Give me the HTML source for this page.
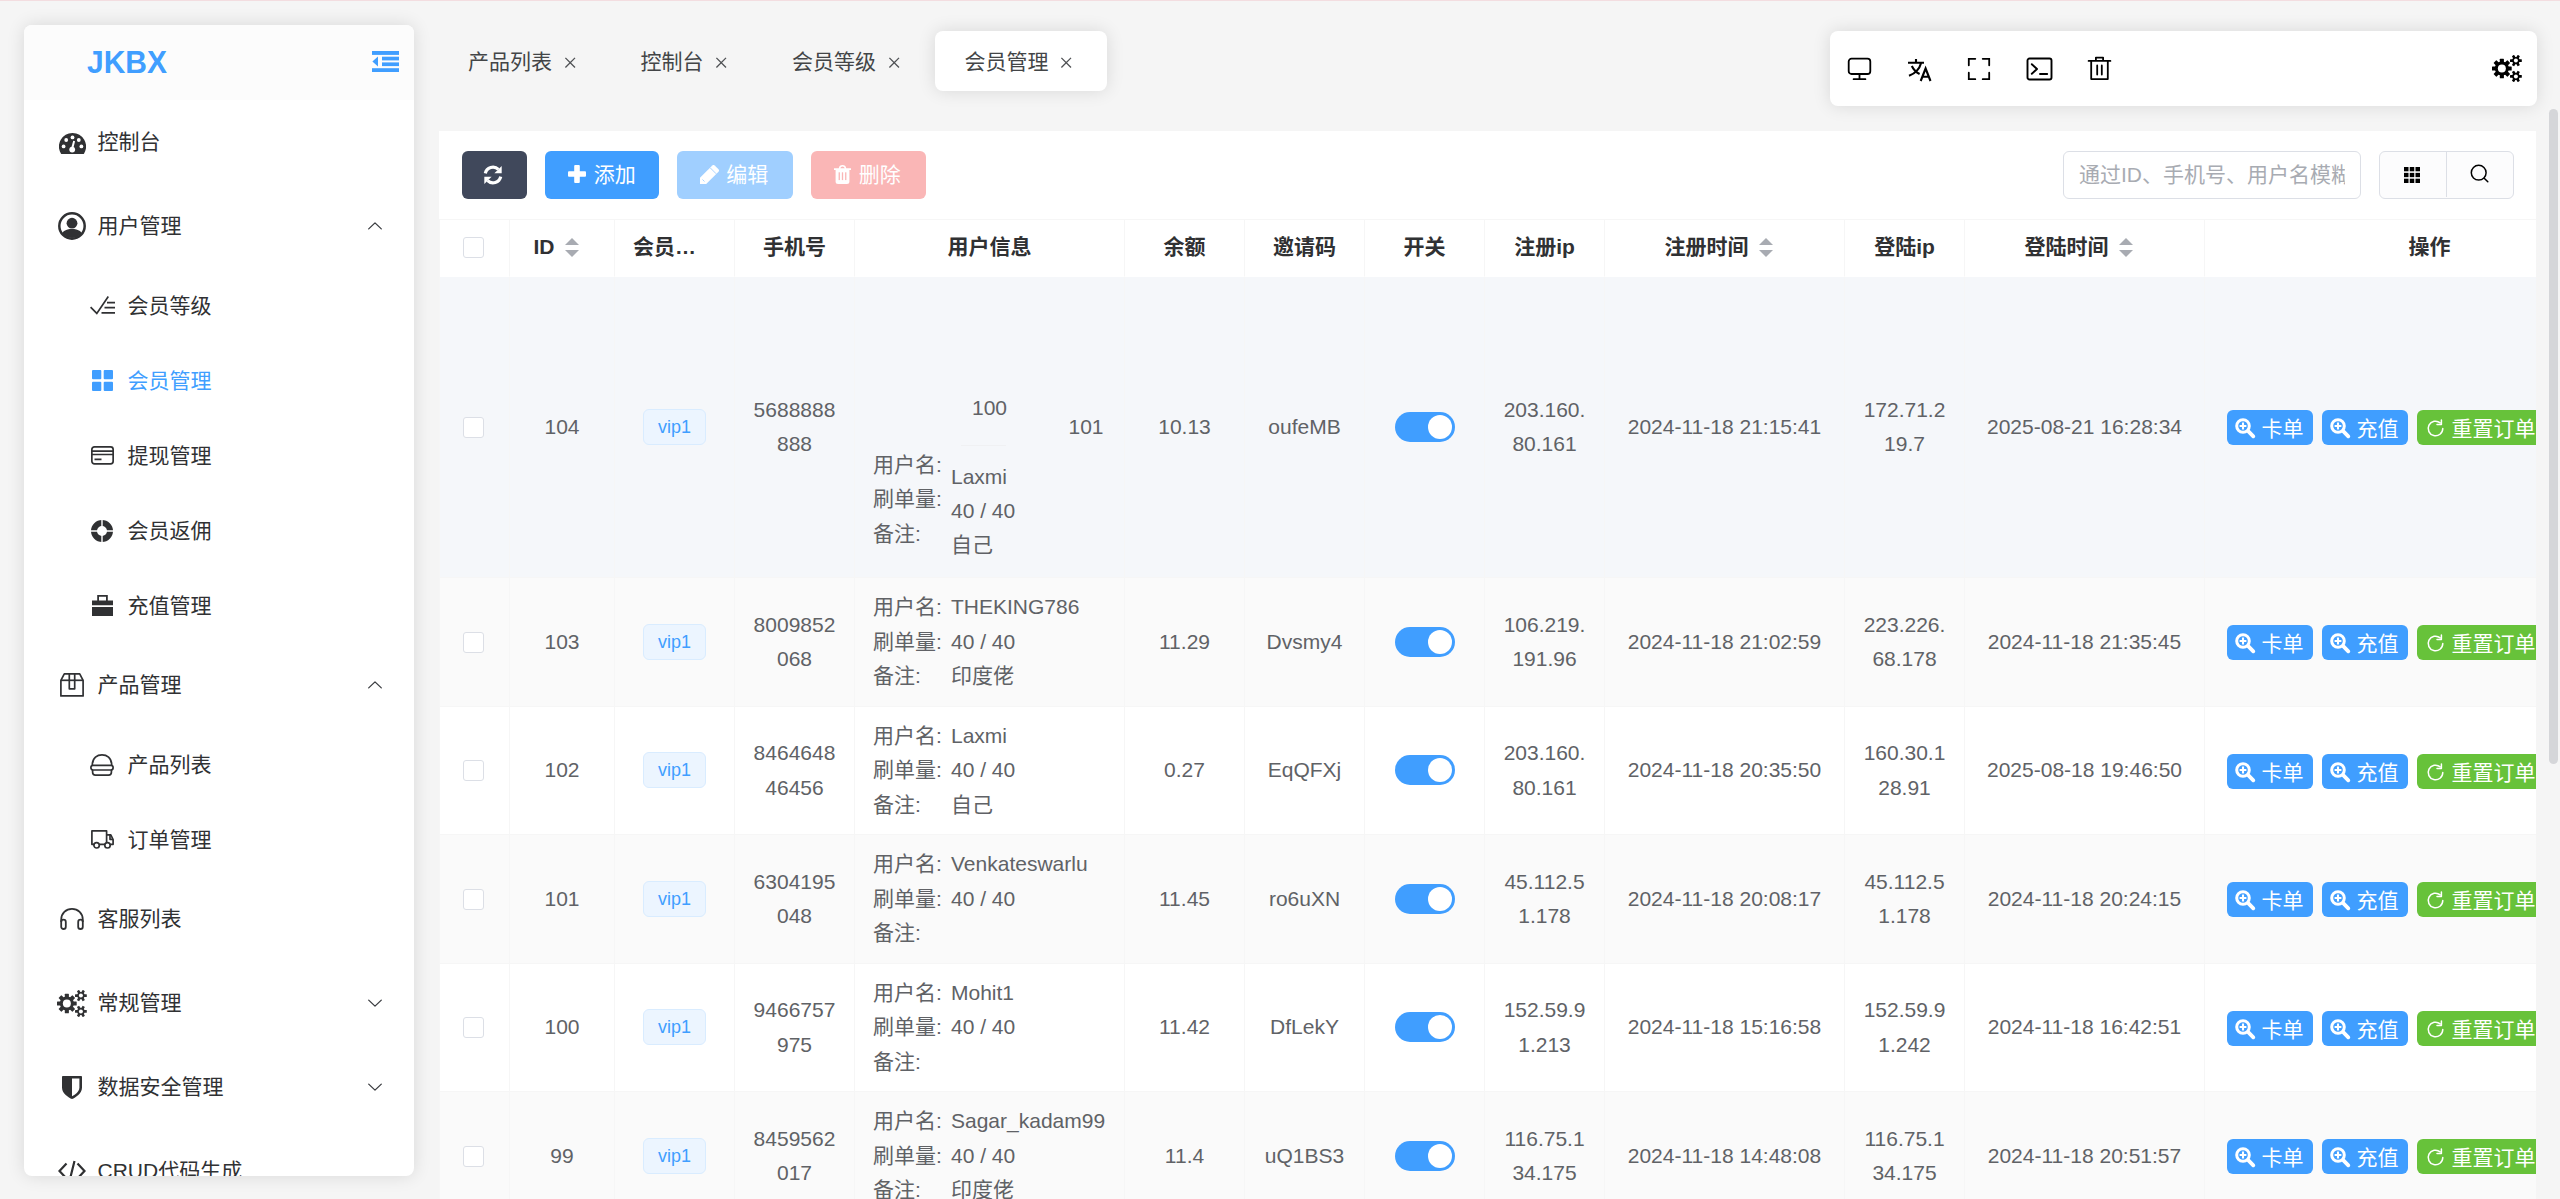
<!DOCTYPE html>
<html lang="zh-CN">
<head>
<meta charset="utf-8">
<title>JKBX</title>
<style>
*{box-sizing:border-box;margin:0;padding:0}
html,body{width:2560px;height:1199px;overflow:hidden;background:#f5f5f5}
body{font-family:"Liberation Sans","Noto Sans CJK SC",sans-serif;font-size:21px;color:#303133;position:relative}
svg{display:block}
#topline{position:absolute;left:0;top:0;width:2560px;height:1px;background:#f3dde0}
/* ---------- sidebar ---------- */
#side{position:absolute;left:24px;top:25px;width:390px;height:1150.5px;background:#fff;border-radius:8px;box-shadow:0 0 18px rgba(0,0,0,.12);overflow:hidden}
#logo{height:75px;background:#fcfcfc;position:relative}
#logo b{position:absolute;left:63px;top:21px;font-size:30px;line-height:34px;color:#409eff;font-weight:700;transform:scaleY(1.075);transform-origin:50% 60%}
#logo svg{position:absolute;left:348px;top:26px}
.mi{position:relative;height:84px;line-height:84px;padding-left:73.5px;white-space:nowrap;color:#303133}
.mi.sub{height:75px;line-height:75px;padding-left:103.5px}
.mi.act{color:#409eff}
.mi .ic{position:absolute;left:30px;top:0;width:36px;height:84px;display:flex;align-items:center;justify-content:center}
.mi.sub .ic{left:60px;height:75px}
.mi .arr{position:absolute;left:342px;top:50%;margin-top:-9px;width:18px;height:18px}
.mi span{position:relative;top:0px}
/* ---------- tabs ---------- */
#tabs{position:absolute;left:438px;top:31px;height:60px;display:flex}
.tab{height:60px;line-height:60px;padding:0 30px;display:flex;align-items:center;color:#434547;white-space:nowrap;border-radius:8px}
.tab.on{background:#fff;box-shadow:0 0 18px rgba(0,0,0,.12)}
.tab span{position:relative;top:1px}
.tab svg{margin-left:7.5px}
/* ---------- tools ---------- */
#tools{position:absolute;left:1830px;top:31px;width:707px;height:75px;background:#fff;border-radius:8px;box-shadow:0 0 18px rgba(0,0,0,.12)}
#tools svg{position:absolute}
/* ---------- card ---------- */
#card{position:absolute;left:439px;top:131px;width:2097px;height:1068px;background:#fff;overflow:hidden}
.btn{position:absolute;top:20px;height:48px;border-radius:6px;color:#fff;display:flex;align-items:center;justify-content:center;white-space:nowrap;line-height:48px}
.btn svg{margin-right:7.5px;position:relative;top:-1px}
#q{position:absolute;left:1624px;top:20px;width:298px;height:48px;border:1.5px solid #dcdfe6;border-radius:6px;background:#fff;color:#a8abb2;line-height:45px;padding-left:15px;overflow:hidden;white-space:nowrap}
#q span{display:block;width:266px;overflow:hidden}
#grp{position:absolute;left:1940px;top:20px;width:135px;height:48px;border:1.5px solid #dcdfe6;border-radius:6px;background:#fcfcfd}
#grp i{position:absolute;left:66px;top:0;width:1px;height:45px;background:#dcdfe6}
#grp svg{position:absolute}
/* ---------- table ---------- */
#tw{position:absolute;left:0;top:88px;width:2097px;border-left:1px solid #f6f6f6;height:980px;border-top:1px solid #f6f6f6;overflow:hidden}
table{border-collapse:separate;border-spacing:0;table-layout:fixed;width:2215px}
th,td{border-right:1px solid #f6f6f6;border-bottom:1px solid #f6f6f6;text-align:center;vertical-align:middle;padding:0 18px;line-height:34.5px;color:#606266;overflow:hidden;font-weight:400}
th{height:57px;padding-top:0;padding-bottom:2px;border-bottom-color:#fff;color:#303133;font-weight:700;background:#fff;white-space:nowrap}
th .ell{display:block;text-align:left;width:83px;overflow:hidden;text-overflow:ellipsis;white-space:nowrap}
td{word-break:break-all}
tr.hv td{background:#f5f7fa}
tr.st td{background:#fafafa}
.nw{white-space:nowrap}
.cb{display:inline-block;width:21px;height:21px;border:1.5px solid #dcdfe6;border-radius:3px;background:#fff;vertical-align:middle;position:relative;top:-1px;left:-1px}
.ct{display:inline-block;position:relative;width:36px;height:21px;vertical-align:middle;margin-right:0}
.ct b{position:absolute;left:10.5px;width:0;height:0;border:7.5px solid transparent}
.ct .u{border-bottom-color:#a8abb2;top:-7.7px}
.ct .d{border-top-color:#a8abb2;top:11.3px}
.tag{display:inline-block;height:36px;line-height:34.5px;padding:0 13.5px;font-size:18px;color:#409eff;background:#ecf5ff;border:1.5px solid #d9ecff;border-radius:6px;vertical-align:middle;position:relative;top:-0.3px}
td.ui{text-align:left;white-space:nowrap}
tr.hv td.ui{padding-top:0}
td.ui .l{display:inline-block;width:78px}
.odd{position:relative;height:300px;margin:0 -18px}
.odd span{position:absolute;line-height:24px;white-space:nowrap}
.odd u{position:absolute;left:106px;top:167.5px;width:45px;height:1px;background:#f0f1f3}
.sw{display:inline-block;width:60px;height:30px;border-radius:15px;background:#409eff;position:relative;vertical-align:middle;top:-1.5px}
.sw i{position:absolute;left:33px;top:3px;width:24px;height:24px;border-radius:50%;background:#fff}
td.op{text-align:left;padding:0 0 0 22px}
.ops{display:flex;white-space:nowrap;position:relative;top:0.6px}
.ob{display:inline-flex;align-items:center;height:35px;padding:0 9px 0 7.5px;border-radius:6px;color:#fff;margin-right:9.5px;line-height:35px}
.ob.b{background:#409eff}
.ob.g{background:#67c23a}
.ob em{font-style:normal;margin-left:6px;position:relative;top:1px}
.ob svg{position:relative;top:1px}
#sb{position:absolute;left:2549px;top:109px;width:9px;height:655px;border-radius:4.5px;background:#d5d6d9}
th .cb{top:-1px}
th .ct{top:1px}
</style>
</head>
<body>
<div id="topline"></div>
<aside id="side"><div id="logo"><b>JKBX</b><svg width="27" height="21" viewBox="0 0 27 21" fill="#409eff"><rect x="0" y="0" width="27" height="3.9"/><rect x="10" y="5.7" width="17" height="3.7"/><rect x="10" y="11.4" width="17" height="3.7"/><rect x="0" y="17.2" width="27" height="3.8"/><path d="M0.4 10.5 6 5.6V15.4z"/></svg></div><nav id="menu"><div class="mi"><i class="ic"><svg style="margin-top:2px" width="27" height="21" viewBox="0 0 27 21"><path d="M13.5 0A13.5 13.5 0 0 0 1.9 20.4Q2.2 21 2.9 21H24.1Q24.8 21 25.1 20.4A13.5 13.5 0 0 0 13.5 0z" fill="#303133"/><g fill="#fff"><circle cx="4.6" cy="13.4" r="1.9"/><circle cx="7.2" cy="7" r="1.9"/><circle cx="13.5" cy="4.4" r="1.9"/><circle cx="19.8" cy="7" r="1.9"/><circle cx="22.4" cy="13.4" r="1.9"/><circle cx="13.2" cy="16.6" r="2.9"/><path d="M11.9 16.2 14.2 7.8 16.1 8.3 13.9 16.8z"/></g></svg></i><span>控制台</span></div><div class="mi"><i class="ic"><svg width="28" height="28" viewBox="0 0 28 28"><clipPath id="uc"><circle cx="14" cy="14" r="12"/></clipPath><circle cx="14" cy="14" r="12.7" fill="none" stroke="#303133" stroke-width="2.5"/><circle cx="14" cy="11.2" r="5.4" fill="#303133"/><path d="M3 26c0-6.5 4.5-9 11-9s11 2.5 11 9z" fill="#303133" clip-path="url(#uc)"/></svg></i><span>用户管理</span><i class="arr"><svg width="18" height="18" viewBox="0 0 18 18" fill="none" stroke="#3a3c40" stroke-width="1.3" stroke-linecap="round" stroke-linejoin="round"><path d="M2.7 11.9 9 5.9 15.3 11.9"/></svg></i></div><div class="mi sub"><i class="ic"><svg width="25" height="19" viewBox="0 0 25 19" fill="none" stroke="#303133" stroke-width="1.7"><path d="M0.6 11.2 6.8 17.4 18.3 0.6"/><path d="M17 6.7H25M14.5 11.7H25M11.5 16.8H25"/></svg></i><span>会员等级</span></div><div class="mi sub act"><i class="ic"><svg width="21" height="21" viewBox="0 0 21 21" fill="#409eff"><rect x="0" y="0" width="9.3" height="9.3" rx="1"/><rect x="11.7" y="0" width="9.3" height="9.3" rx="1"/><rect x="0" y="11.7" width="9.3" height="9.3" rx="1"/><rect x="11.7" y="11.7" width="9.3" height="9.3" rx="1"/></svg></i><span>会员管理</span></div><div class="mi sub"><i class="ic"><svg width="23" height="19" viewBox="0 0 23 19" fill="none" stroke="#303133" stroke-width="1.7"><rect x="0.85" y="0.85" width="21.3" height="17" rx="2.6"/><path d="M1 5.2H22M1 8.5H22M3.5 13.3H10.5"/></svg></i><span>提现管理</span></div><div class="mi sub"><i class="ic"><svg width="22" height="22" viewBox="0 0 22 22"><circle cx="11" cy="11" r="8" fill="none" stroke="#303133" stroke-width="6"/><path d="M11 0V22M0 11H22" stroke="#fff" stroke-width="1.4"/></svg></i><span>会员返佣</span></div><div class="mi sub"><i class="ic"><svg width="21" height="21" viewBox="0 0 21 21" fill="#303133"><path d="M5.2 0H15.8V5.4H21V10.3H0V5.4H5.2zM7 1.8V5.4H14V1.8z" fill-rule="evenodd"/><rect x="0" y="12" width="21" height="9"/></svg></i><span>充值管理</span></div><div class="mi"><i class="ic"><svg width="24" height="24" viewBox="0 0 24 24" fill="none" stroke="#303133" stroke-width="1.7" stroke-linejoin="round"><path d="M4.3 0.9H19.7L23.1 7.3V22.9H0.9V7.3z"/><path d="M0.9 7.3H23.1"/><path d="M9.3 0.9V15.8H14.7V0.9"/></svg></i><span>产品管理</span><i class="arr"><svg width="18" height="18" viewBox="0 0 18 18" fill="none" stroke="#3a3c40" stroke-width="1.3" stroke-linecap="round" stroke-linejoin="round"><path d="M2.7 11.9 9 5.9 15.3 11.9"/></svg></i></div><div class="mi sub"><i class="ic"><svg width="24" height="22" viewBox="0 0 24 22" fill="none" stroke="#303133" stroke-width="1.7" stroke-linejoin="round"><path d="M2.3 11.3C2.3 3.5 7.5 0.9 12 0.9S21.7 3.5 21.7 11.3"/><rect x="0.9" y="11.3" width="22.2" height="4.7" rx="2.3"/><path d="M2.6 16V18.3Q2.6 21.1 5.4 21.1H18.6Q21.4 21.1 21.4 18.3V16"/></svg></i><span>产品列表</span></div><div class="mi sub"><i class="ic"><svg width="23" height="19" viewBox="0 0 23 19" fill="none" stroke="#303133" stroke-width="1.7" stroke-linejoin="round"><path d="M3 14.3H0.9V0.9H15.6V14.3H8.3"/><path d="M15.6 4.8H19.8L22.1 9.5V14.3H19.2M15.6 14.3H13.8"/><path d="M19 4.8V9.3H22"/><circle cx="5.6" cy="15.3" r="2.7" fill="#fff"/><circle cx="16.5" cy="15.3" r="2.7" fill="#fff"/></svg></i><span>订单管理</span></div><div class="mi"><i class="ic"><svg width="24" height="22" viewBox="0 0 24 22" fill="none" stroke="#303133" stroke-width="1.8"><path d="M1.2 14V11.7C1.2 5.5 6 0.9 12 0.9S22.8 5.5 22.8 11.7V14"/><rect x="1.2" y="11.6" width="4.6" height="9.4" rx="2.3"/><rect x="18.2" y="11.6" width="4.6" height="9.4" rx="2.3"/></svg></i><span>客服列表</span></div><div class="mi"><i class="ic"><svg width="30" height="27" viewBox="0 0 30 27"><circle cx="9.85" cy="13.5" r="7" fill="#303133"/><rect x="7.8" y="3.65" width="4.1" height="4.35" rx="0.5" fill="#303133" transform="rotate(0 9.85 13.5)"/><rect x="7.8" y="3.65" width="4.1" height="4.35" rx="0.5" fill="#303133" transform="rotate(45 9.85 13.5)"/><rect x="7.8" y="3.65" width="4.1" height="4.35" rx="0.5" fill="#303133" transform="rotate(90 9.85 13.5)"/><rect x="7.8" y="3.65" width="4.1" height="4.35" rx="0.5" fill="#303133" transform="rotate(135 9.85 13.5)"/><rect x="7.8" y="3.65" width="4.1" height="4.35" rx="0.5" fill="#303133" transform="rotate(180 9.85 13.5)"/><rect x="7.8" y="3.65" width="4.1" height="4.35" rx="0.5" fill="#303133" transform="rotate(225 9.85 13.5)"/><rect x="7.8" y="3.65" width="4.1" height="4.35" rx="0.5" fill="#303133" transform="rotate(270 9.85 13.5)"/><rect x="7.8" y="3.65" width="4.1" height="4.35" rx="0.5" fill="#303133" transform="rotate(315 9.85 13.5)"/><circle cx="9.85" cy="13.5" r="4" fill="#fff"/><circle cx="23.9" cy="5.6" r="3.7" fill="#303133"/><rect x="22.6" y="-0.3" width="2.6" height="3.7" rx="0.5" fill="#303133" transform="rotate(90 23.9 5.6)"/><rect x="22.6" y="-0.3" width="2.6" height="3.7" rx="0.5" fill="#303133" transform="rotate(150 23.9 5.6)"/><rect x="22.6" y="-0.3" width="2.6" height="3.7" rx="0.5" fill="#303133" transform="rotate(210 23.9 5.6)"/><rect x="22.6" y="-0.3" width="2.6" height="3.7" rx="0.5" fill="#303133" transform="rotate(270 23.9 5.6)"/><rect x="22.6" y="-0.3" width="2.6" height="3.7" rx="0.5" fill="#303133" transform="rotate(330 23.9 5.6)"/><rect x="22.6" y="-0.3" width="2.6" height="3.7" rx="0.5" fill="#303133" transform="rotate(390 23.9 5.6)"/><circle cx="23.9" cy="5.6" r="2" fill="#fff"/><circle cx="23.9" cy="21.4" r="3.7" fill="#303133"/><rect x="22.6" y="15.5" width="2.6" height="3.7" rx="0.5" fill="#303133" transform="rotate(90 23.9 21.4)"/><rect x="22.6" y="15.5" width="2.6" height="3.7" rx="0.5" fill="#303133" transform="rotate(150 23.9 21.4)"/><rect x="22.6" y="15.5" width="2.6" height="3.7" rx="0.5" fill="#303133" transform="rotate(210 23.9 21.4)"/><rect x="22.6" y="15.5" width="2.6" height="3.7" rx="0.5" fill="#303133" transform="rotate(270 23.9 21.4)"/><rect x="22.6" y="15.5" width="2.6" height="3.7" rx="0.5" fill="#303133" transform="rotate(330 23.9 21.4)"/><rect x="22.6" y="15.5" width="2.6" height="3.7" rx="0.5" fill="#303133" transform="rotate(390 23.9 21.4)"/><circle cx="23.9" cy="21.4" r="2" fill="#fff"/></svg></i><span>常规管理</span><i class="arr"><svg width="18" height="18" viewBox="0 0 18 18" fill="none" stroke="#3a3c40" stroke-width="1.3" stroke-linecap="round" stroke-linejoin="round"><path d="M2.7 6.1 9 12.1 15.3 6.1"/></svg></i></div><div class="mi"><i class="ic"><svg width="20" height="23" viewBox="0 0 20 23"><path d="M0.8 0H19.2Q20 0 20 0.8V11.5C20 17.5 13.5 21.7 10 23 6.5 21.7 0 17.5 0 11.5V0.8Q0 0 0.8 0z" fill="#303133"/><path d="M10 2.6H17.4V11.5C17.4 15.5 13.5 18.7 10 20.2z" fill="#fff"/></svg></i><span>数据安全管理</span><i class="arr"><svg width="18" height="18" viewBox="0 0 18 18" fill="none" stroke="#3a3c40" stroke-width="1.3" stroke-linecap="round" stroke-linejoin="round"><path d="M2.7 6.1 9 12.1 15.3 6.1"/></svg></i></div><div class="mi"><i class="ic"><svg width="28" height="22" viewBox="0 0 28 22" fill="none" stroke="#303133" stroke-width="2.2"><path d="M8.5 3.5 1.5 11 8.5 18.5M19.5 3.5 26.5 11 19.5 18.5M16.5 1 11.5 21"/></svg></i><span>CRUD代码生成</span></div></nav></aside>
<div id="tabs"><div class="tab"><span>产品列表</span><svg width="21" height="21" viewBox="0 0 21 21" fill="none" stroke="#4f5154" stroke-width="1.3"><path d="M5.4 6.9 15 16.5M15 6.9 5.4 16.5"/></svg></div><div class="tab"><span>控制台</span><svg width="21" height="21" viewBox="0 0 21 21" fill="none" stroke="#4f5154" stroke-width="1.3"><path d="M5.4 6.9 15 16.5M15 6.9 5.4 16.5"/></svg></div><div class="tab"><span>会员等级</span><svg width="21" height="21" viewBox="0 0 21 21" fill="none" stroke="#4f5154" stroke-width="1.3"><path d="M5.4 6.9 15 16.5M15 6.9 5.4 16.5"/></svg></div><div class="tab on"><span>会员管理</span><svg width="21" height="21" viewBox="0 0 21 21" fill="none" stroke="#4f5154" stroke-width="1.3"><path d="M5.4 6.9 15 16.5M15 6.9 5.4 16.5"/></svg></div></div>
<div id="tools"><svg style="left:17px;top:26.3px" width="25" height="24" viewBox="0 0 25 24" fill="none" stroke="#000" stroke-width="1.8" stroke-linecap="round"><rect x="1.7" y="1.7" width="21.6" height="15.3" rx="2.8"/><path d="M12.5 17V22.2M6.6 22.2H18.4"/></svg><svg style="left:77px;top:27px" width="26" height="24" viewBox="0 0 26 24" fill="none" stroke="#000" stroke-width="2.1"><path d="M1 4.7H17M9 1V4.7M14.2 4.7C12.5 11 8 15.5 2 17.8M4.8 8C6.5 11.5 9.5 14.5 12.6 16"/><path d="M13.7 23 18.6 10.5 23.5 23M15.3 18.7H21.9" stroke-linejoin="miter"/></svg><svg style="left:137.4px;top:25.6px" width="24" height="24" viewBox="0 0 24 24" fill="none" stroke="#000" stroke-width="1.8" stroke-linecap="round"><path d="M1.8 8.3V1.8H8.3M15.7 1.8H22.2V8.3M22.2 15.7V22.2H15.7M8.3 22.2H1.8V15.7"/></svg><svg style="left:196px;top:25.5px" width="27" height="24" viewBox="0 0 27 24" fill="none" stroke="#000" stroke-width="1.9" stroke-linecap="round" stroke-linejoin="round"><rect x="1.5" y="1.5" width="24" height="21" rx="2"/><path d="M5.8 7.2 11 12 5.8 16.8M14 17H21.2"/></svg><svg style="left:257px;top:25px" width="25" height="25" viewBox="0 0 25 25" fill="none" stroke="#000" stroke-width="1.8" stroke-linecap="round" stroke-linejoin="round"><path d="M1.6 4.9H23.4M8.9 4.9V1.6H16.1V4.9M4.2 4.9V23.1H20.8V4.9M10.2 9.5V18.5M14.8 9.5V18.5"/></svg><svg style="left:662px;top:23.8px" width="30" height="27" viewBox="0 0 30 27"><circle cx="9.85" cy="13.5" r="7" fill="#000"/><rect x="7.8" y="3.65" width="4.1" height="4.35" rx="0.5" fill="#000" transform="rotate(0 9.85 13.5)"/><rect x="7.8" y="3.65" width="4.1" height="4.35" rx="0.5" fill="#000" transform="rotate(45 9.85 13.5)"/><rect x="7.8" y="3.65" width="4.1" height="4.35" rx="0.5" fill="#000" transform="rotate(90 9.85 13.5)"/><rect x="7.8" y="3.65" width="4.1" height="4.35" rx="0.5" fill="#000" transform="rotate(135 9.85 13.5)"/><rect x="7.8" y="3.65" width="4.1" height="4.35" rx="0.5" fill="#000" transform="rotate(180 9.85 13.5)"/><rect x="7.8" y="3.65" width="4.1" height="4.35" rx="0.5" fill="#000" transform="rotate(225 9.85 13.5)"/><rect x="7.8" y="3.65" width="4.1" height="4.35" rx="0.5" fill="#000" transform="rotate(270 9.85 13.5)"/><rect x="7.8" y="3.65" width="4.1" height="4.35" rx="0.5" fill="#000" transform="rotate(315 9.85 13.5)"/><circle cx="9.85" cy="13.5" r="4" fill="#fff"/><circle cx="23.9" cy="5.6" r="3.7" fill="#000"/><rect x="22.6" y="-0.3" width="2.6" height="3.7" rx="0.5" fill="#000" transform="rotate(90 23.9 5.6)"/><rect x="22.6" y="-0.3" width="2.6" height="3.7" rx="0.5" fill="#000" transform="rotate(150 23.9 5.6)"/><rect x="22.6" y="-0.3" width="2.6" height="3.7" rx="0.5" fill="#000" transform="rotate(210 23.9 5.6)"/><rect x="22.6" y="-0.3" width="2.6" height="3.7" rx="0.5" fill="#000" transform="rotate(270 23.9 5.6)"/><rect x="22.6" y="-0.3" width="2.6" height="3.7" rx="0.5" fill="#000" transform="rotate(330 23.9 5.6)"/><rect x="22.6" y="-0.3" width="2.6" height="3.7" rx="0.5" fill="#000" transform="rotate(390 23.9 5.6)"/><circle cx="23.9" cy="5.6" r="2" fill="#fff"/><circle cx="23.9" cy="21.4" r="3.7" fill="#000"/><rect x="22.6" y="15.5" width="2.6" height="3.7" rx="0.5" fill="#000" transform="rotate(90 23.9 21.4)"/><rect x="22.6" y="15.5" width="2.6" height="3.7" rx="0.5" fill="#000" transform="rotate(150 23.9 21.4)"/><rect x="22.6" y="15.5" width="2.6" height="3.7" rx="0.5" fill="#000" transform="rotate(210 23.9 21.4)"/><rect x="22.6" y="15.5" width="2.6" height="3.7" rx="0.5" fill="#000" transform="rotate(270 23.9 21.4)"/><rect x="22.6" y="15.5" width="2.6" height="3.7" rx="0.5" fill="#000" transform="rotate(330 23.9 21.4)"/><rect x="22.6" y="15.5" width="2.6" height="3.7" rx="0.5" fill="#000" transform="rotate(390 23.9 21.4)"/><circle cx="23.9" cy="21.4" r="2" fill="#fff"/></svg></div>
<main id="card"><div class="btn" style="left:23px;width:65px;background:#40485b"><svg style="margin:0 3px 0 0;top:0" width="20" height="20" viewBox="0 0 20 20"><g fill="none" stroke="#fff" stroke-width="3.2"><path d="M2.3 8.3A7.8 7.8 0 0 1 15.4 4.4"/><path d="M17.7 11.7A7.8 7.8 0 0 1 4.6 15.6"/></g><path d="M18.7 1V8.3H11.4z" fill="#fff"/><path d="M1.3 19V11.7H8.6z" fill="#fff"/></svg></div><div class="btn" style="left:106px;width:114px;background:#409eff"><svg width="18" height="18" viewBox="0 0 18 18" fill="#fff"><rect x="0" y="6.2" width="18" height="5.6" rx="1"/><rect x="6.2" y="0" width="5.6" height="18" rx="1"/></svg><span>添加</span></div><div class="btn" style="left:238px;width:116px;background:#a0cfff;padding-right:2px"><svg width="19" height="19" viewBox="0 0 19 19"><path d="M0 19V12.8L12.3 0.5Q13.5-0.6 14.7 0.5L18.5 4.3Q19.6 5.5 18.5 6.7L6.2 19z" fill="#fff"/><path d="M10.2 2.8 16.2 8.8" stroke="#a0cfff" stroke-width="0.9"/><path d="M2.5 14.5 4.5 16.5" stroke="#a0cfff" stroke-width="0.9"/></svg><span>编辑</span></div><div class="btn" style="left:372px;width:115px;background:#fab6b6;padding-right:2px"><svg width="17" height="19" viewBox="0 0 17 19" fill="#fff"><path d="M0 3.3H4.8Q5.3 0 8.5 0T12.2 3.3H17V5H0zM6.3 3.3H10.7Q10.3 1.4 8.5 1.4T6.3 3.3z" fill-rule="evenodd"/><path d="M1.6 5H15.4V16.5Q15.4 19 12.9 19H4.1Q1.6 19 1.6 16.5z"/><g fill="#fab6b6"><rect x="4.6" y="7.3" width="1.3" height="7.8"/><rect x="7.85" y="7.3" width="1.3" height="7.8"/><rect x="11.1" y="7.3" width="1.3" height="7.8"/></g></svg><span>删除</span></div><div id="q"><span>通过ID、手机号、用户名模糊搜索</span></div><div id="grp"><svg style="left:24px;top:14.5px" width="16" height="16" viewBox="0 0 16 16" fill="#000"><rect x="0" y="0" width="4.5" height="4.3"/><rect x="5.75" y="0" width="4.5" height="4.3"/><rect x="11.5" y="0" width="4.5" height="4.3"/><rect x="0" y="5.85" width="4.5" height="4.3"/><rect x="5.75" y="5.85" width="4.5" height="4.3"/><rect x="11.5" y="5.85" width="4.5" height="4.3"/><rect x="0" y="11.7" width="4.5" height="4.3"/><rect x="5.75" y="11.7" width="4.5" height="4.3"/><rect x="11.5" y="11.7" width="4.5" height="4.3"/></svg><i></i><svg style="left:90px;top:12.2px" width="19" height="19" viewBox="0 0 19 19" fill="none" stroke="#000" stroke-width="1.5" stroke-linecap="round"><circle cx="8.7" cy="8.7" r="7.4"/><path d="M14.2 14.2 17.8 17.8"/></svg></div><div id="tw"><table><colgroup><col style="width:70px"><col style="width:105px"><col style="width:120px"><col style="width:120px"><col style="width:270px"><col style="width:120px"><col style="width:120px"><col style="width:120px"><col style="width:120px"><col style="width:240px"><col style="width:120px"><col style="width:240px"><col style="width:450px"></colgroup><thead><tr><th><span class="cb"></span></th><th>ID<i class="ct"><b class="u"></b><b class="d"></b></i></th><th><span class="ell">会员等级</span></th><th>手机号</th><th>用户信息</th><th>余额</th><th>邀请码</th><th>开关</th><th>注册ip</th><th>注册时间<i class="ct"><b class="u"></b><b class="d"></b></i></th><th>登陆ip</th><th>登陆时间<i class="ct"><b class="u"></b><b class="d"></b></i></th><th>操作</th></tr></thead><tbody><tr class="hv" style="height:301px"><td><span class="cb"></span></td><td>104</td><td><span class="tag">vip1</span></td><td>5688888888</td><td class="ui"><div class="odd"><span style="left:117px;top:119px">100</span><span style="left:213.5px;top:137.6px">101</span><u></u><span style="left:18px;top:176.2px">用户名:</span><span style="left:18px;top:210.2px">刷单量:</span><span style="left:18px;top:244.7px">备注:</span><span style="left:96px;top:188px">Laxmi</span><span style="left:96px;top:222.2px">40 / 40</span><span style="left:96px;top:256.2px">自己</span></div></td><td>10.13</td><td>oufeMB</td><td><span class="sw"><i></i></span></td><td>203.160.80.161</td><td class="nw">2024-11-18 21:15:41</td><td>172.71.219.7</td><td class="nw">2025-08-21 16:28:34</td><td class="op"><div class="ops"><span class="ob b"><svg width="21" height="21" viewBox="0 0 21 21" fill="none" stroke="#fff"><circle cx="8" cy="8" r="6.3" stroke-width="3"/><path d="M13.2 13.2 18.3 18.3" stroke-width="3.8" stroke-linecap="round"/><path d="M4.6 8H11.4M8 4.6V11.4" stroke-width="2.1"/></svg><em>卡单</em></span><span class="ob b"><svg width="21" height="21" viewBox="0 0 21 21" fill="none" stroke="#fff"><circle cx="8" cy="8" r="6.3" stroke-width="3"/><path d="M13.2 13.2 18.3 18.3" stroke-width="3.8" stroke-linecap="round"/><path d="M4.6 8H11.4M8 4.6V11.4" stroke-width="2.1"/></svg><em>充值</em></span><span class="ob g"><svg width="21" height="21" viewBox="0 0 21 21" fill="none" stroke="#fff" stroke-width="1.5" stroke-linecap="round" stroke-linejoin="round"><path d="M17.8 10.5A7.3 7.3 0 1 1 15.2 4.9"/><path d="M16.4 2V6.4H12"/></svg><em>重置订单</em></span></div></td></tr><tr class="st" style="height:129px"><td><span class="cb"></span></td><td>103</td><td><span class="tag">vip1</span></td><td>8009852068</td><td class="ui"><div><span class="l">用户名:</span>THEKING786</div><div><span class="l">刷单量:</span>40 / 40</div><div><span class="l">备注:</span>印度佬</div></td><td>11.29</td><td>Dvsmy4</td><td><span class="sw"><i></i></span></td><td>106.219.191.96</td><td class="nw">2024-11-18 21:02:59</td><td>223.226.68.178</td><td class="nw">2024-11-18 21:35:45</td><td class="op"><div class="ops"><span class="ob b"><svg width="21" height="21" viewBox="0 0 21 21" fill="none" stroke="#fff"><circle cx="8" cy="8" r="6.3" stroke-width="3"/><path d="M13.2 13.2 18.3 18.3" stroke-width="3.8" stroke-linecap="round"/><path d="M4.6 8H11.4M8 4.6V11.4" stroke-width="2.1"/></svg><em>卡单</em></span><span class="ob b"><svg width="21" height="21" viewBox="0 0 21 21" fill="none" stroke="#fff"><circle cx="8" cy="8" r="6.3" stroke-width="3"/><path d="M13.2 13.2 18.3 18.3" stroke-width="3.8" stroke-linecap="round"/><path d="M4.6 8H11.4M8 4.6V11.4" stroke-width="2.1"/></svg><em>充值</em></span><span class="ob g"><svg width="21" height="21" viewBox="0 0 21 21" fill="none" stroke="#fff" stroke-width="1.5" stroke-linecap="round" stroke-linejoin="round"><path d="M17.8 10.5A7.3 7.3 0 1 1 15.2 4.9"/><path d="M16.4 2V6.4H12"/></svg><em>重置订单</em></span></div></td></tr><tr class="" style="height:128px"><td><span class="cb"></span></td><td>102</td><td><span class="tag">vip1</span></td><td>846464846456</td><td class="ui"><div><span class="l">用户名:</span>Laxmi</div><div><span class="l">刷单量:</span>40 / 40</div><div><span class="l">备注:</span>自己</div></td><td>0.27</td><td>EqQFXj</td><td><span class="sw"><i></i></span></td><td>203.160.80.161</td><td class="nw">2024-11-18 20:35:50</td><td>160.30.128.91</td><td class="nw">2025-08-18 19:46:50</td><td class="op"><div class="ops"><span class="ob b"><svg width="21" height="21" viewBox="0 0 21 21" fill="none" stroke="#fff"><circle cx="8" cy="8" r="6.3" stroke-width="3"/><path d="M13.2 13.2 18.3 18.3" stroke-width="3.8" stroke-linecap="round"/><path d="M4.6 8H11.4M8 4.6V11.4" stroke-width="2.1"/></svg><em>卡单</em></span><span class="ob b"><svg width="21" height="21" viewBox="0 0 21 21" fill="none" stroke="#fff"><circle cx="8" cy="8" r="6.3" stroke-width="3"/><path d="M13.2 13.2 18.3 18.3" stroke-width="3.8" stroke-linecap="round"/><path d="M4.6 8H11.4M8 4.6V11.4" stroke-width="2.1"/></svg><em>充值</em></span><span class="ob g"><svg width="21" height="21" viewBox="0 0 21 21" fill="none" stroke="#fff" stroke-width="1.5" stroke-linecap="round" stroke-linejoin="round"><path d="M17.8 10.5A7.3 7.3 0 1 1 15.2 4.9"/><path d="M16.4 2V6.4H12"/></svg><em>重置订单</em></span></div></td></tr><tr class="st" style="height:129px"><td><span class="cb"></span></td><td>101</td><td><span class="tag">vip1</span></td><td>6304195048</td><td class="ui"><div><span class="l">用户名:</span>Venkateswarlu</div><div><span class="l">刷单量:</span>40 / 40</div><div><span class="l">备注:</span></div></td><td>11.45</td><td>ro6uXN</td><td><span class="sw"><i></i></span></td><td>45.112.51.178</td><td class="nw">2024-11-18 20:08:17</td><td>45.112.51.178</td><td class="nw">2024-11-18 20:24:15</td><td class="op"><div class="ops"><span class="ob b"><svg width="21" height="21" viewBox="0 0 21 21" fill="none" stroke="#fff"><circle cx="8" cy="8" r="6.3" stroke-width="3"/><path d="M13.2 13.2 18.3 18.3" stroke-width="3.8" stroke-linecap="round"/><path d="M4.6 8H11.4M8 4.6V11.4" stroke-width="2.1"/></svg><em>卡单</em></span><span class="ob b"><svg width="21" height="21" viewBox="0 0 21 21" fill="none" stroke="#fff"><circle cx="8" cy="8" r="6.3" stroke-width="3"/><path d="M13.2 13.2 18.3 18.3" stroke-width="3.8" stroke-linecap="round"/><path d="M4.6 8H11.4M8 4.6V11.4" stroke-width="2.1"/></svg><em>充值</em></span><span class="ob g"><svg width="21" height="21" viewBox="0 0 21 21" fill="none" stroke="#fff" stroke-width="1.5" stroke-linecap="round" stroke-linejoin="round"><path d="M17.8 10.5A7.3 7.3 0 1 1 15.2 4.9"/><path d="M16.4 2V6.4H12"/></svg><em>重置订单</em></span></div></td></tr><tr class="" style="height:128px"><td><span class="cb"></span></td><td>100</td><td><span class="tag">vip1</span></td><td>9466757975</td><td class="ui"><div><span class="l">用户名:</span>Mohit1</div><div><span class="l">刷单量:</span>40 / 40</div><div><span class="l">备注:</span></div></td><td>11.42</td><td>DfLekY</td><td><span class="sw"><i></i></span></td><td>152.59.91.213</td><td class="nw">2024-11-18 15:16:58</td><td>152.59.91.242</td><td class="nw">2024-11-18 16:42:51</td><td class="op"><div class="ops"><span class="ob b"><svg width="21" height="21" viewBox="0 0 21 21" fill="none" stroke="#fff"><circle cx="8" cy="8" r="6.3" stroke-width="3"/><path d="M13.2 13.2 18.3 18.3" stroke-width="3.8" stroke-linecap="round"/><path d="M4.6 8H11.4M8 4.6V11.4" stroke-width="2.1"/></svg><em>卡单</em></span><span class="ob b"><svg width="21" height="21" viewBox="0 0 21 21" fill="none" stroke="#fff"><circle cx="8" cy="8" r="6.3" stroke-width="3"/><path d="M13.2 13.2 18.3 18.3" stroke-width="3.8" stroke-linecap="round"/><path d="M4.6 8H11.4M8 4.6V11.4" stroke-width="2.1"/></svg><em>充值</em></span><span class="ob g"><svg width="21" height="21" viewBox="0 0 21 21" fill="none" stroke="#fff" stroke-width="1.5" stroke-linecap="round" stroke-linejoin="round"><path d="M17.8 10.5A7.3 7.3 0 1 1 15.2 4.9"/><path d="M16.4 2V6.4H12"/></svg><em>重置订单</em></span></div></td></tr><tr class="st" style="height:129px"><td><span class="cb"></span></td><td>99</td><td><span class="tag">vip1</span></td><td>8459562017</td><td class="ui"><div><span class="l">用户名:</span>Sagar_kadam99</div><div><span class="l">刷单量:</span>40 / 40</div><div><span class="l">备注:</span>印度佬</div></td><td>11.4</td><td>uQ1BS3</td><td><span class="sw"><i></i></span></td><td>116.75.134.175</td><td class="nw">2024-11-18 14:48:08</td><td>116.75.134.175</td><td class="nw">2024-11-18 20:51:57</td><td class="op"><div class="ops"><span class="ob b"><svg width="21" height="21" viewBox="0 0 21 21" fill="none" stroke="#fff"><circle cx="8" cy="8" r="6.3" stroke-width="3"/><path d="M13.2 13.2 18.3 18.3" stroke-width="3.8" stroke-linecap="round"/><path d="M4.6 8H11.4M8 4.6V11.4" stroke-width="2.1"/></svg><em>卡单</em></span><span class="ob b"><svg width="21" height="21" viewBox="0 0 21 21" fill="none" stroke="#fff"><circle cx="8" cy="8" r="6.3" stroke-width="3"/><path d="M13.2 13.2 18.3 18.3" stroke-width="3.8" stroke-linecap="round"/><path d="M4.6 8H11.4M8 4.6V11.4" stroke-width="2.1"/></svg><em>充值</em></span><span class="ob g"><svg width="21" height="21" viewBox="0 0 21 21" fill="none" stroke="#fff" stroke-width="1.5" stroke-linecap="round" stroke-linejoin="round"><path d="M17.8 10.5A7.3 7.3 0 1 1 15.2 4.9"/><path d="M16.4 2V6.4H12"/></svg><em>重置订单</em></span></div></td></tr></tbody></table></div></main>
<div id="sb"></div>
</body>
</html>
